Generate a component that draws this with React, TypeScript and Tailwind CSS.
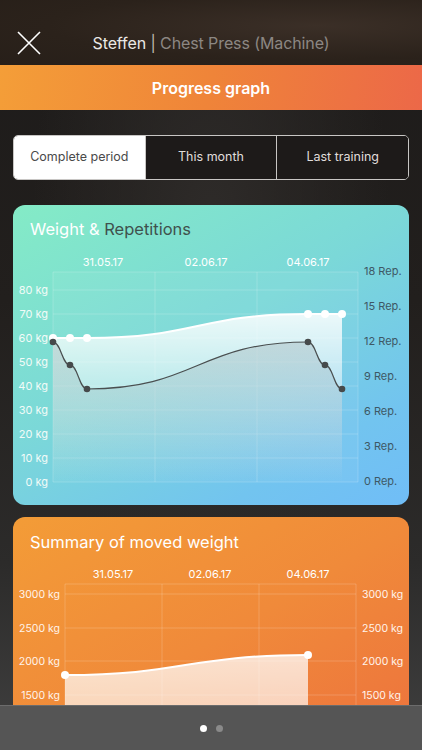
import React from 'react';

const kgTicks = [
  { label: '80 kg', y: 85 },
  { label: '70 kg', y: 109 },
  { label: '60 kg', y: 133 },
  { label: '50 kg', y: 157 },
  { label: '40 kg', y: 181 },
  { label: '30 kg', y: 205 },
  { label: '20 kg', y: 229 },
  { label: '10 kg', y: 253 },
  { label: '0 kg', y: 277 },
];

const repTicks = [
  { label: '18 Rep.', y: 66 },
  { label: '15 Rep.', y: 101 },
  { label: '12 Rep.', y: 136 },
  { label: '9 Rep.', y: 171 },
  { label: '6 Rep.', y: 206 },
  { label: '3 Rep.', y: 241 },
  { label: '0 Rep.', y: 276 },
];

const sumTicks = [
  { label: '3000 kg', y: 77 },
  { label: '2500 kg', y: 111 },
  { label: '2000 kg', y: 144 },
  { label: '1500 kg', y: 178 },
];

const WeightChart = () => {
  const whiteLine =
    'M40 133 L57 133 L74 133 C184 133 185 109 295 109 L312 109 L329 109';
  const darkLine =
    'M40 137 C48 137 49 160 57 160 C65 160 66 184 74 184 C184 184 185 137 295 137 C303 137 304 160 312 160 C320 160 321 184 329 184';
  return (
    <svg width="396" height="265" viewBox="0 35 396 265" className="block">
      <defs>
        <linearGradient id="wfill" x1="0" y1="0" x2="0" y2="1">
          <stop offset="0" stopColor="#ffffff" stopOpacity="0.85" />
          <stop offset="1" stopColor="#ffffff" stopOpacity="0" />
        </linearGradient>
        <linearGradient id="dfill" x1="0" y1="0" x2="0" y2="1">
          <stop offset="0" stopColor="#6b7a80" stopOpacity="0.22" />
          <stop offset="1" stopColor="#6b7a80" stopOpacity="0" />
        </linearGradient>
      </defs>
      <rect x="40" y="67" width="305" height="210" fill="#ffffff" fillOpacity="0.05" />
      {[40, 142, 244, 345].map((x) => (
        <line key={x} x1={x} y1="67" x2={x} y2="277" stroke="#ffffff" strokeOpacity="0.3" strokeWidth="0.6" />
      ))}
      {[67, ...kgTicks.map((t) => t.y)].map((y) => (
        <line key={y} x1="40" y1={y} x2="345" y2={y} stroke="#ffffff" strokeOpacity="0.3" strokeWidth="0.6" />
      ))}
      <path d={whiteLine + ' L329 277 L40 277 Z'} fill="url(#wfill)" />
      <path d={darkLine + ' L329 277 L40 277 Z'} fill="url(#dfill)" />
      <path d={whiteLine} fill="none" stroke="#ffffff" strokeWidth="2" />
      <path d={darkLine} fill="none" stroke="#4a4f50" strokeWidth="1.2" />
      {[40, 57, 74, 295, 312, 329].map((x, i) => (
        <circle key={'w' + i} cx={x} cy={i < 3 ? 133 : 109} r="4" fill="#ffffff" />
      ))}
      {[
        [40, 137],
        [57, 160],
        [74, 184],
        [295, 137],
        [312, 160],
        [329, 184],
      ].map(([x, y], i) => (
        <circle key={'d' + i} cx={x} cy={y} r="3.3" fill="#464a4b" />
      ))}
      {[
        ['31.05.17', 90],
        ['02.06.17', 193],
        ['04.06.17', 295],
      ].map(([t, x]) => (
        <text key={t} x={x} y="57" textAnchor="middle" dominantBaseline="central" fontSize="11" fill="#ffffff">
          {t}
        </text>
      ))}
      {kgTicks.map((t) => (
        <text key={t.label} x="35" y={t.y} textAnchor="end" dominantBaseline="central" fontSize="11" fill="#f2fbf8">
          {t.label}
        </text>
      ))}
      {repTicks.map((t) => (
        <text key={t.label} x="351" y={t.y} dominantBaseline="central" fontSize="11" fill="#3e5865">
          {t.label}
        </text>
      ))}
    </svg>
  );
};

const SummaryChart = () => {
  const line = 'M52 158 C170 158 175 138 295 138';
  return (
    <svg width="396" height="300" viewBox="0 36 396 300" className="block">
      <defs>
        <linearGradient id="sfill" x1="0" y1="0" x2="0" y2="1">
          <stop offset="0" stopColor="#ffffff" stopOpacity="0.75" />
          <stop offset="1" stopColor="#ffffff" stopOpacity="0.45" />
        </linearGradient>
      </defs>
      {[52, 149, 246, 343].map((x) => (
        <line key={x} x1={x} y1="67" x2={x} y2="300" stroke="#ffffff" strokeOpacity="0.3" strokeWidth="0.6" />
      ))}
      {[67, ...sumTicks.map((t) => t.y), 212].map((y) => (
        <line key={y} x1="52" y1={y} x2="343" y2={y} stroke="#ffffff" strokeOpacity="0.3" strokeWidth="0.6" />
      ))}
      <path d={line + ' L295 300 L52 300 Z'} fill="url(#sfill)" />
      <path d={line} fill="none" stroke="#ffffff" strokeWidth="2" />
      <circle cx="52" cy="158" r="4" fill="#ffffff" />
      <circle cx="295" cy="138" r="4" fill="#ffffff" />
      {[
        ['31.05.17', 100],
        ['02.06.17', 197],
        ['04.06.17', 295],
      ].map(([t, x]) => (
        <text key={t} x={x} y="57" textAnchor="middle" dominantBaseline="central" fontSize="11" fill="#ffffff">
          {t}
        </text>
      ))}
      {sumTicks.map((t) => (
        <text key={'l' + t.label} x="47" y={t.y} textAnchor="end" dominantBaseline="central" fontSize="10.5" fill="#fff4ec">
          {t.label}
        </text>
      ))}
      {sumTicks.map((t) => (
        <text key={'r' + t.label} x="349" y={t.y} dominantBaseline="central" fontSize="10.5" fill="#fff4ec">
          {t.label}
        </text>
      ))}
    </svg>
  );
};

export default function App() {
  return (
    <div className="h-[750px] w-full overflow-hidden flex flex-col font-['Inter','Noto_Sans',sans-serif] bg-[linear-gradient(180deg,#1d1b1a_0%,#221f1d_40%,#2c2b2a_75%,#404040_100%)]">
      {/* Header */}
      <div className="h-[65px] shrink-0 flex items-center px-[17px] pt-[20px] bg-[radial-gradient(ellipse_at_75%_40%,#3b2f27_0%,#2b221b_60%,#271f19_100%)]">
        <svg width="24" height="24" viewBox="0 0 24 24" className="shrink-0">
          <path d="M1 1 L23 23 M23 1 L1 23" stroke="#ffffff" strokeWidth="1.6" />
        </svg>
        <div className="flex-1 text-center text-[16px] pr-[24px] tracking-[-0.1px]">
          <span className="text-[#ebe8e5]">Steffen</span>
          <span className="text-[#bdb8b3]"> | </span>
          <span className="text-[#8c8783]">Chest Press (Machine)</span>
        </div>
      </div>

      {/* Orange title bar */}
      <div className="h-[45px] shrink-0 flex items-center justify-center bg-[linear-gradient(100deg,#f49e38_0%,#ef8439_50%,#ec6848_100%)]">
        <span className="text-white text-[16px] font-semibold">Progress graph</span>
      </div>

      {/* Content */}
      <div className="flex-1 overflow-hidden px-[13px] pt-[25px] bg-[radial-gradient(ellipse_at_50%_20%,#2e2b29_0%,transparent_60%)]">
        <div className="h-[45px] flex rounded-[5px] border border-[#c8c6c4] overflow-hidden text-[12.5px]">
          <div className="flex-1 flex items-center justify-center bg-white text-[#4a4a4a]">Complete period</div>
          <div className="flex-1 flex items-center justify-center bg-[#1d1a19] text-[#e0dedc] border-l border-[#c8c6c4]">This month</div>
          <div className="flex-1 flex items-center justify-center bg-[#1d1a19] text-[#e0dedc] border-l border-[#c8c6c4]">Last training</div>
        </div>

        <div className="mt-[25px] h-[300px] rounded-[12px] overflow-hidden bg-[linear-gradient(150deg,#84ebc6_0%,#7bd8d8_45%,#72c4ef_80%,#70bdf7_100%)]">
          <div className="pt-[13px] px-[17px] h-[35px] text-[16.5px] leading-[22px]">
            <span className="text-white">Weight &amp; </span>
            <span className="text-[#3f514d]">Repetitions</span>
          </div>
          <WeightChart />
        </div>

        <div className="mt-[12px] h-[300px] rounded-t-[12px] overflow-hidden bg-[linear-gradient(150deg,#f39c37_0%,#f08a3a_45%,#ed733d_85%,#ec6b3f_100%)]">
          <div className="pt-[14px] px-[17px] h-[36px] text-[16.5px] leading-[22px] text-white">Summary of moved weight</div>
          <SummaryChart />
        </div>
      </div>

      {/* Page indicator */}
      <div className="h-[45px] shrink-0 flex items-center justify-center gap-[9px] bg-[#555555] border-t border-[#6c6c6c]">
        <div className="w-[7px] h-[7px] rounded-full bg-white" />
        <div className="w-[7px] h-[7px] rounded-full bg-[#8a8a8a]" />
      </div>
    </div>
  );
}
